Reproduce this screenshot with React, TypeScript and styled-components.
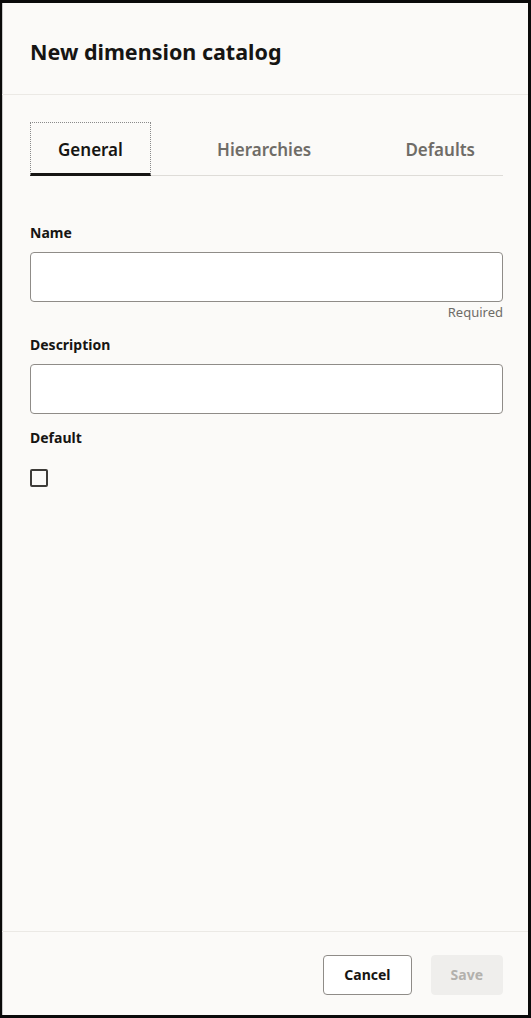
import styled, { createGlobalStyle } from "styled-components";

const GlobalStyle = createGlobalStyle`
  html, body {
    margin: 0;
    padding: 0;
    background: #000;
  }
  * {
    box-sizing: border-box;
  }
`;

const TABS = ["General", "Hierarchies", "Defaults"];

function App(): JSX.Element {
  return (
    <>
      <GlobalStyle />
      <Frame>
        <Header>
          <Title>New dimension catalog</Title>
        </Header>
        <Body>
          <TabBar>
            {TABS.map((tab, i) => (
              <Tab key={tab} $selected={i === 0}>{tab}</Tab>
            ))}
          </TabBar>
          <Form>
            <Field>
              <Label>Name</Label>
              <Input />
              <Hint>Required</Hint>
            </Field>
            <Field>
              <Label>Description</Label>
              <Input />
            </Field>
            <Field>
              <Label>Default</Label>
              <Checkbox type="checkbox" />
            </Field>
          </Form>
        </Body>
        <Footer>
          <Button>Cancel</Button>
          <Button $disabled>Save</Button>
        </Footer>
      </Frame>
    </>
  );
};

const Frame = styled.div`
  display: flex;
  flex-direction: column;
  height: 1018px;
  width: 531px;
  background: #fbfaf8;
  border-style: solid;
  border-color: #0a0a0a;
  border-width: 3px 3px 3px 2px;
  box-shadow: inset 1px 0 0 #c9c9c9;
  font-family: "Noto Sans", "Open Sans", sans-serif;
  color: #161513;
`;
const Header = styled.div`
  height: 92px;
  display: flex;
  align-items: center;
  padding: 0 28px 0 28px;
  border-bottom: 1px solid #ebe9e5;
`;
const Title = styled.h1`
  margin: 0;
  padding-top: 6px;
  font-size: 21.5px;
  font-weight: 700;
`;
const Body = styled.div`
  flex: 1;
  padding: 27px 25px 0 28px;
`;
const TabBar = styled.div`
  display: flex;
  justify-content: space-between;
  border-bottom: 1px solid #dedcd8;
`;
const Tab = styled.div<{ $selected?: boolean }>`
  height: 54px;
  display: flex;
  align-items: center;
  justify-content: center;
  padding: 3px 27px 0;
  font-size: 17px;
  font-weight: 600;
  color: ${(p) => (p.$selected ? "#161513" : "#6f6c67")};
  border: 1px dotted ${(p) => (p.$selected ? "#8a8a8a" : "transparent")};
  border-bottom: 3px solid ${(p) => (p.$selected ? "#161513" : "transparent")};
  margin-bottom: -1px;
`;
const Form = styled.div`
  display: flex;
  flex-direction: column;
  padding-top: 47px;
`;
const Field = styled.div`
  display: flex;
  flex-direction: column;
  margin-bottom: 14px;
`;
const Label = styled.label`
  font-size: 14px;
  font-weight: 700;
  line-height: 20px;
  margin-bottom: 9px;
  color: #161513;
`;
const Input = styled.input`
  height: 50px;
  width: 100%;
  background: #fff;
  border: 1px solid #8f8c88;
  border-radius: 4px;
  outline: none;
`;
const Hint = styled.span`
  align-self: flex-end;
  font-size: 13px;
  line-height: 18px;
  color: #6f6c67;
  margin-top: 1px;
`;
const Checkbox = styled.input`
  appearance: none;
  width: 18px;
  height: 18px;
  margin: 12px 0 0 0;
  border: 2px solid #3d3b38;
  border-radius: 2px;
  background: transparent;
`;
const Footer = styled.div`
  height: 84px;
  display: flex;
  justify-content: flex-end;
  align-items: center;
  gap: 19px;
  padding: 2px 25px 0 0;
  border-top: 1px solid #ebe9e5;
`;
const Button = styled.button<{ $disabled?: boolean }>`
  height: 40px;
  padding: 0 ${(p) => (p.$disabled ? "19px" : "20px")};
  min-width: 72px;
  font-family: "Noto Sans", "Open Sans", sans-serif;
  font-size: 14px;
  font-weight: 700;
  border-radius: 4px;
  border: 1px solid ${(p) => (p.$disabled ? "#efeeec" : "#8f8c88")};
  background: ${(p) => (p.$disabled ? "#efeeec" : "#fff")};
  color: ${(p) => (p.$disabled ? "#b3b1ad" : "#161513")};
`;

export default App;
